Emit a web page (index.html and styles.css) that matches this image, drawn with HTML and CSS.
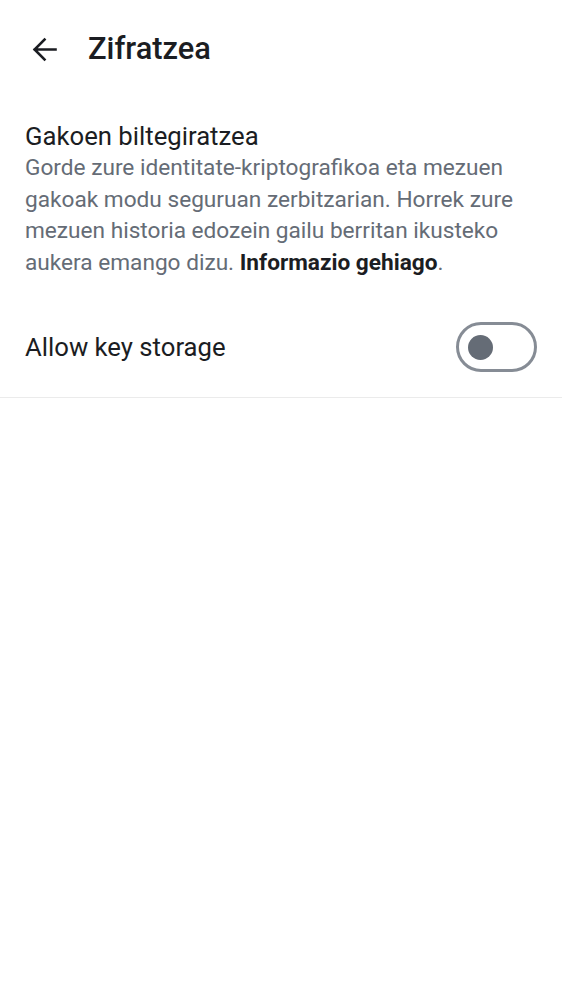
FILE: index.html
```html
<!DOCTYPE html>
<html>
<head>
<meta charset="utf-8">
<link rel="stylesheet" href="styles.css">
</head>
<body>
<header class="topbar">
  <svg class="back" width="33" height="33" viewBox="0 0 24 24" aria-hidden="true">
    <path d="M20 12H5M12 4.8 4.8 12l7.2 7.2" fill="none" stroke="#1b1d22" stroke-width="1.9" stroke-linecap="square" stroke-linejoin="miter"/>
  </svg>
  <h1 class="title">Zifratzea</h1>
</header>
<section class="section">
  <h2 class="heading">Gakoen biltegiratzea</h2>
  <p class="desc">Gorde zure identitate-kriptografikoa eta mezuen gakoak modu seguruan zerbitzarian. Horrek zure mezuen historia edozein gailu berritan ikusteko aukera emango dizu. <b class="link">Informazio gehiago</b>.</p>
</section>
<div class="row">
  <span class="row-label">Allow key storage</span>
  <span class="switch"><span class="knob"></span></span>
</div>
</body>
</html>
```
FILE: styles.css
```css
html, body {
  margin: 0;
  padding: 0;
  background: #ffffff;
}
body {
  font-family: Roboto, "Noto Sans", sans-serif;
  color: #1b1d22;
}
.topbar {
  display: flex;
  align-items: center;
  height: 98px;
  padding-left: 28px;
  box-sizing: border-box;
}
.back {
  display: block;
  flex: none;
}
.title {
  margin: 0 0 0 27px;
  font-weight: 500;
  font-size: 30.8px;
  line-height: 38px;
  color: #1b1d22;
}
.section {
  padding: 23px 25px 0;
}
.heading {
  margin: 0;
  font-weight: 400;
  font-size: 25.7px;
  line-height: 30px;
  color: #1b1d22;
}
.desc {
  margin: 1px 0 0;
  font-size: 22.65px;
  line-height: 31.5px;
  color: #656c76;
}
.link {
  font-weight: 700;
  color: #1b1d22;
}
.row {
  display: flex;
  align-items: center;
  justify-content: space-between;
  margin-top: 19px;
  padding: 0 25px;
  height: 101px;
  box-sizing: border-box;
  border-bottom: 1px solid #ebebeb;
}
.row-label {
  font-size: 25.7px;
  color: #1b1d22;
}
.switch {
  display: flex;
  align-items: center;
  width: 81px;
  height: 50px;
  box-sizing: border-box;
  border: 3px solid #868c95;
  border-radius: 25px;
  padding-left: 9px;
}
.knob {
  width: 25px;
  height: 25px;
  border-radius: 50%;
  background: #656c76;
}
```
